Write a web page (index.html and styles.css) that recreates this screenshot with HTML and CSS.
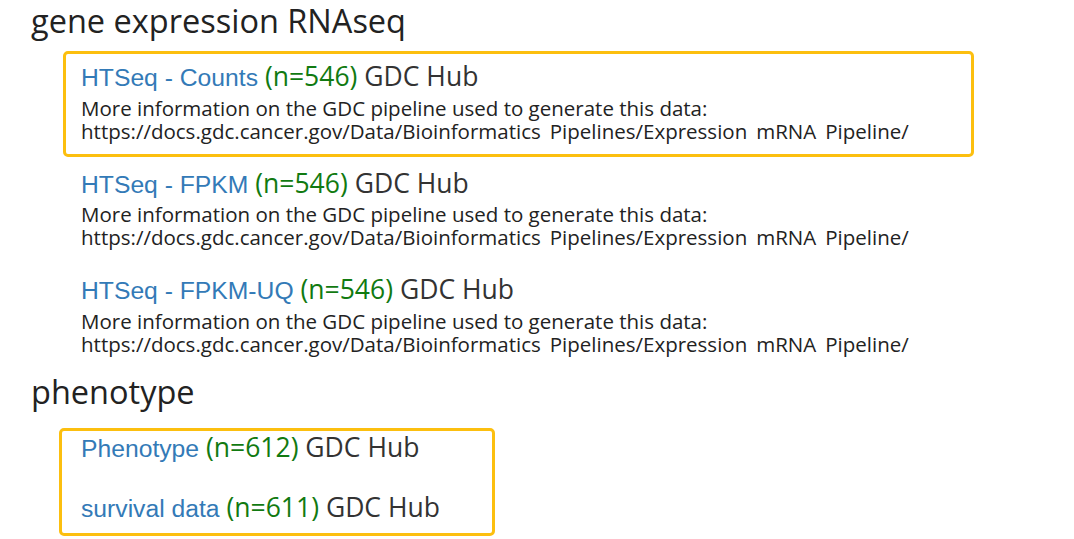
FILE: index.html
```html
<!DOCTYPE html>
<html lang="en">
<head>
<meta charset="utf-8">
<title>GDC Hub datasets</title>
<link rel="stylesheet" href="styles.css">
</head>
<body>
<div class="page">
  <h2 class="section first">gene expression RNAseq</h2>
  <div class="list">
    <div class="item highlight">
      <div class="title"><a href="#" class="link">HTSeq - Counts</a> <span class="count">(n=546)</span> <span class="hub">GDC Hub</span></div>
      <div class="desc">More information on the GDC pipeline used to generate this data:<br>https://docs.gdc.cancer.gov/Data/Bioinformatics<span class="us">_</span>Pipelines/Expression<span class="us">_</span>mRNA<span class="us">_</span>Pipeline/</div>
    </div>
    <div class="item">
      <div class="title"><a href="#" class="link">HTSeq - FPKM</a> <span class="count">(n=546)</span> <span class="hub">GDC Hub</span></div>
      <div class="desc">More information on the GDC pipeline used to generate this data:<br>https://docs.gdc.cancer.gov/Data/Bioinformatics<span class="us">_</span>Pipelines/Expression<span class="us">_</span>mRNA<span class="us">_</span>Pipeline/</div>
    </div>
    <div class="item">
      <div class="title"><a href="#" class="link">HTSeq - FPKM-UQ</a> <span class="count">(n=546)</span> <span class="hub">GDC Hub</span></div>
      <div class="desc">More information on the GDC pipeline used to generate this data:<br>https://docs.gdc.cancer.gov/Data/Bioinformatics<span class="us">_</span>Pipelines/Expression<span class="us">_</span>mRNA<span class="us">_</span>Pipeline/</div>
    </div>
  </div>
  <h2 class="section second">phenotype</h2>
  <div class="group">
    <div class="title"><a href="#" class="link">Phenotype</a> <span class="count">(n=612)</span> <span class="hub">GDC Hub</span></div>
    <div class="title"><a href="#" class="link">survival data</a> <span class="count">(n=611)</span> <span class="hub">GDC Hub</span></div>
  </div>
</div>
</body>
</html>
```
FILE: styles.css
```css
html, body {
  margin: 0;
  padding: 0;
  background: #ffffff;
}

.page {
  padding: 1px 0 0 31px;
  font-family: "Open Sans", "Noto Sans", sans-serif;
  color: #333333;
}

.section {
  margin: 0;
  font-size: 32.5px;
  line-height: 40px;
  font-weight: 400;
  color: #222222;
}

.section.first {
  margin-bottom: 10px;
}

.section.second {
  margin-top: 2px;
  margin-bottom: 16px;
}

.list {
  display: flex;
  flex-direction: column;
  gap: 1px;
  margin-left: 32px;
}

.item {
  width: 911px;
  box-sizing: border-box;
  border: 3px solid transparent;
  border-radius: 5px;
  padding: 9px 15px 11px 15px;
}

.item.highlight {
  border-color: #fcbf0f;
}

.title {
  font-size: 26.5px;
  line-height: 1;
  white-space: nowrap;
}

.link {
  font-family: "Liberation Sans", Arial, sans-serif;
  font-size: 24.7px;
  color: #337ab7;
  text-decoration: none;
}

.count {
  color: #117a11;
}

.hub {
  color: #333333;
}

.desc {
  margin-top: 6px;
  font-size: 20.5px;
  line-height: 23px;
  color: #222222;
  white-space: nowrap;
}

.us {
  color: transparent;
}

.group {
  margin-left: 28px;
  width: 436px;
  box-sizing: border-box;
  border: 3px solid #fcbf0f;
  border-radius: 5px;
  padding: 3px 19px 11px 19px;
  display: flex;
  flex-direction: column;
  gap: 32px;
}
```
